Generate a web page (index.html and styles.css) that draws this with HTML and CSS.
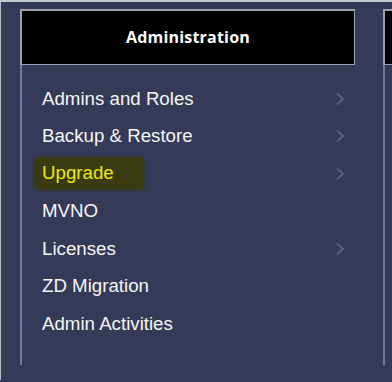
FILE: index.html
```html
<!DOCTYPE html>
<html lang="en">
<head>
    <meta charset="UTF-8">
    <meta name="viewport" content="width=device-width, initial-scale=1.0">
    <title>Administration</title>
    <link rel="stylesheet" href="styles.css">
</head>
<body>
    <!-- Frame with the menu panels -->
    <div class="frame">
        <div class="panel">
            <div class="panel-header">Administration</div>
            <ul class="menu">
                <li class="menu-item">
                    <span>Admins and Roles</span>
                    <svg class="chevron" width="10" height="14" viewBox="0 0 10 14"><polyline points="2,1.5 8,7 2,12.5"/></svg>
                </li>
                <li class="menu-item">
                    <span>Backup &amp; Restore</span>
                    <svg class="chevron" width="10" height="14" viewBox="0 0 10 14"><polyline points="2,1.5 8,7 2,12.5"/></svg>
                </li>
                <li class="menu-item">
                    <span class="marked">Upgrade</span>
                    <svg class="chevron" width="10" height="14" viewBox="0 0 10 14"><polyline points="2,1.5 8,7 2,12.5"/></svg>
                </li>
                <li class="menu-item"><span>MVNO</span></li>
                <li class="menu-item">
                    <span>Licenses</span>
                    <svg class="chevron" width="10" height="14" viewBox="0 0 10 14"><polyline points="2,1.5 8,7 2,12.5"/></svg>
                </li>
                <li class="menu-item"><span>ZD Migration</span></li>
                <li class="menu-item"><span>Admin Activities</span></li>
            </ul>
        </div>

        <!-- Next panel, cut off by the window -->
        <div class="panel">
            <div class="panel-header">&nbsp;</div>
            <ul class="menu"></ul>
        </div>
    </div>
</body>
</html>
```

FILE: styles.css
```css
/* General page */
body {
    margin: 0;
    height: 382px;
    overflow: hidden;
    background-color: #343a57;
}

/* Outer frame with light edge on top and left */
.frame {
    display: flex;
    gap: 28px;
    height: 380px;
    overflow: hidden;
    padding: 7px 0 0 19px;
    box-sizing: border-box;
    border-top: 2px solid #c4c8d4;
    border-left: 1px solid #b8bcc8;
}

.panel {
    width: 335px;
    flex-shrink: 0;
    display: flex;
    flex-direction: column;
}

/* Black title bar */
.panel-header {
    height: 51px;
    padding-bottom: 2px;
    box-sizing: content-box;
    background: #000;
    border: 2px solid #9a9eb0;
    border-right-width: 1px;
    border-bottom-width: 1px;
    color: #fff;
    font-family: "Open Sans", sans-serif;
    font-weight: 700;
    font-size: 16px;
    letter-spacing: 0.2px;
    display: flex;
    align-items: center;
    justify-content: center;
}

/* List of links */
.menu {
    list-style: none;
    margin: 0;
    padding: 15px 0 0 0;
    box-sizing: border-box;
    height: 300px;
    border-left: 2px solid #737a98;
    font-family: "Liberation Sans", Arial, sans-serif;
    font-size: 18.7px;
    color: #f6f6fa;
}

.menu-item {
    height: 37.5px;
    display: flex;
    align-items: center;
    justify-content: space-between;
    padding: 0 10px 0 20px;
}

.chevron {
    fill: none;
    stroke: #5a6180;
    stroke-width: 2;
}

/* Highlighter mark on Upgrade */
.marked {
    color: #eaea10;
    background: #3b3b12;
    margin-left: -7px;
    padding: 4px 29px 5px 7px;
    border-radius: 3px;
    box-shadow: 0 0 3px 1px #3b3b12;
}
```
